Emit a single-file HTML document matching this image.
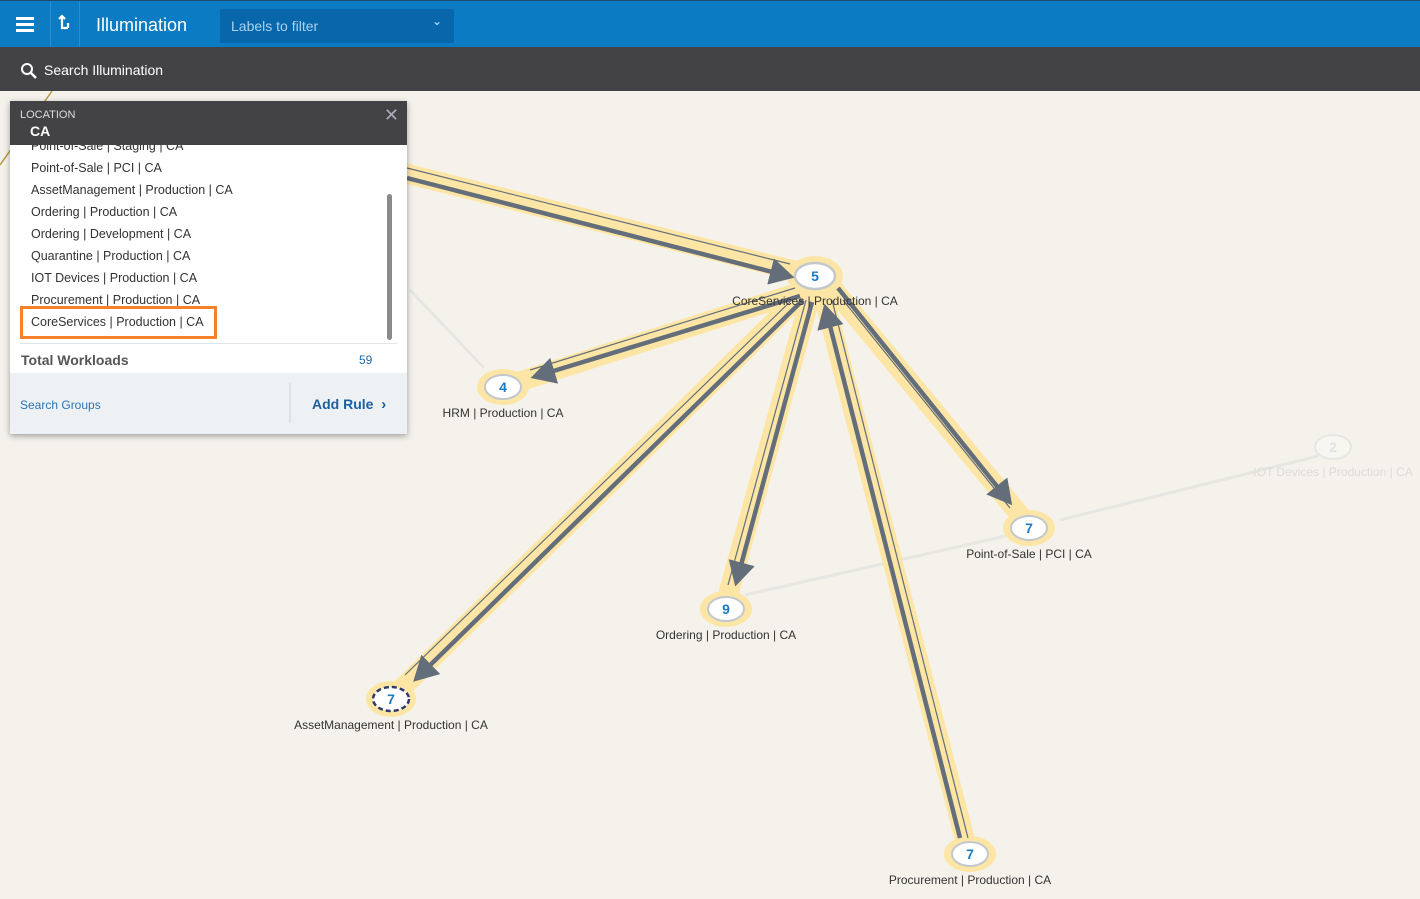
<!DOCTYPE html>
<html><head><meta charset="utf-8"><style>
*{margin:0;padding:0;box-sizing:border-box}
body{width:1420px;height:899px;overflow:hidden;background:#f4f2eb;font-family:"Liberation Sans","DejaVu Sans",sans-serif;position:relative}
.top{position:absolute;left:0;top:0;width:1420px;height:47px;background:#0b7bc3;border-top:1px solid #1b4a6e}
.sb{position:absolute;left:0;top:47px;width:1420px;height:44px;background:#434345;color:#fff;font-size:14px}
svg.g{position:absolute;left:0;top:0}
.panel{position:absolute;left:10px;top:101px;width:397px;height:333px;background:#fff;box-shadow:0 2px 6px rgba(0,0,0,.35)}
.ph{height:44px;background:#434345;color:#fff;position:relative}
</style></head><body>
<svg class="g" width="1420" height="899">
<defs>
<marker id="a" markerWidth="6" markerHeight="6" refX="4" refY="3" orient="auto" markerUnits="strokeWidth"><path d="M0,0 L5.5,3 L0,6 Z" fill="#636e7a"/></marker>
</defs>
<path d="M52,91 L0,165" stroke="#b8953e" stroke-width="1.5"/>
<g stroke="#e6e6e3" stroke-width="3" fill="none">
<line x1="410" y1="290" x2="484" y2="368"/>
<line x1="745" y1="595" x2="1010" y2="535"/>
<line x1="1318" y1="456" x2="1060" y2="520"/>
</g>
<g stroke="#fde6a5" stroke-width="20" stroke-linecap="round" fill="none">
<line x1="400" y1="172" x2="800" y2="272"/>
<line x1="800" y1="292" x2="515" y2="383"/>
<line x1="800" y1="296" x2="400" y2="690"/>
<line x1="810" y1="298" x2="728" y2="595"/>
<line x1="824" y1="298" x2="965" y2="840"/>
<line x1="834" y1="290" x2="1020" y2="515"/>
</g>
<g fill="#fde6a5"><ellipse cx="815" cy="276" rx="28" ry="20"/><ellipse cx="503" cy="387" rx="26" ry="18"/><ellipse cx="726" cy="609" rx="26" ry="18"/><ellipse cx="1029" cy="528" rx="26" ry="18"/><ellipse cx="391" cy="699" rx="25" ry="18"/><ellipse cx="970" cy="854" rx="26" ry="18"/></g>
<g stroke="#636e7a" fill="none" stroke-linecap="butt">
<line x1="407" y1="178" x2="788" y2="276" stroke-width="4.5" marker-end="url(#a)"/>
<line x1="407" y1="168" x2="790" y2="264" stroke-width="1.2"/>
<line x1="800" y1="296" x2="537" y2="376" stroke-width="4.5" marker-end="url(#a)"/>
<line x1="795" y1="288" x2="530" y2="370" stroke-width="1.2"/>
<line x1="803" y1="300" x2="418" y2="677" stroke-width="4.5" marker-end="url(#a)"/>
<line x1="797" y1="295" x2="405" y2="675" stroke-width="1.2"/>
<line x1="812" y1="302" x2="737" y2="580" stroke-width="4.5" marker-end="url(#a)"/>
<line x1="806" y1="300" x2="728" y2="585" stroke-width="1.2"/>
<line x1="960" y1="838" x2="826" y2="310" stroke-width="4.5" marker-end="url(#a)"/>
<line x1="832" y1="300" x2="968" y2="838" stroke-width="1.2"/>
<line x1="838" y1="288" x2="1008" y2="500" stroke-width="4.5" marker-end="url(#a)"/>
<line x1="843" y1="300" x2="1010" y2="508" stroke-width="1.2"/>
</g>
<g font-family="Liberation Sans,sans-serif" font-size="14" font-weight="bold" fill="#1a7bc0" text-anchor="middle">
<ellipse cx="815" cy="276" rx="20" ry="13" fill="#fff" stroke="#c3c8cc" stroke-width="2.5"/><text x="815" y="281">5</text>
<ellipse cx="503" cy="387" rx="18" ry="12" fill="#fff" stroke="#c3c8cc" stroke-width="2"/><text x="503" y="392">4</text>
<ellipse cx="726" cy="609" rx="18" ry="12" fill="#fff" stroke="#c3c8cc" stroke-width="2"/><text x="726" y="614">9</text>
<ellipse cx="1029" cy="528" rx="18" ry="12" fill="#fff" stroke="#c3c8cc" stroke-width="2"/><text x="1029" y="533">7</text>
<ellipse cx="391" cy="699" rx="18" ry="12" fill="#fff" stroke="#2f3a6b" stroke-width="2.5" stroke-dasharray="5,3"/><text x="391" y="704">7</text>
<ellipse cx="970" cy="854" rx="18" ry="12" fill="#fff" stroke="#c3c8cc" stroke-width="2"/><text x="970" y="859">7</text>
<ellipse cx="1333" cy="447" rx="18" ry="12" fill="#f7f6f1" stroke="#e6e6e3" stroke-width="2"/><text x="1333" y="452" fill="#dde3e8">2</text>
</g>
<g font-family="Liberation Sans,sans-serif" font-size="12" fill="#333" text-anchor="middle">
<text x="815" y="305">CoreServices | Production | CA</text>
<text x="503" y="417">HRM | Production | CA</text>
<text x="726" y="639">Ordering | Production | CA</text>
<text x="1029" y="558">Point-of-Sale | PCI | CA</text>
<text x="391" y="729">AssetManagement | Production | CA</text>
<text x="970" y="884">Procurement | Production | CA</text>
<text x="1333" y="476" fill="#dcdcd8">IOT Devices | Production | CA</text>
</g>
</svg>
<div class="top">
<svg width="50" height="46" style="position:absolute;left:0;top:0"><g fill="#fff"><rect x="16" y="16" width="18" height="3"/><rect x="16" y="22" width="18" height="3"/><rect x="16" y="28" width="18" height="3"/></g></svg>
<div style="position:absolute;left:50px;top:0;width:1px;height:46px;background:#2a8ed0"></div>
<div style="position:absolute;left:79px;top:0;width:1px;height:46px;background:#2a8ed0"></div>
<svg width="20" height="20" style="position:absolute;left:56px;top:13px"><path d="M6,2 V14 H12 M3,5 L6,2 L9,5 M12,14 L12,9" stroke="#fff" stroke-width="2.2" fill="none"/></svg>
<div style="position:absolute;left:96px;top:14px;color:#fff;font-size:18px">Illumination</div>
<div style="position:absolute;left:220px;top:8px;width:234px;height:34px;background:#0867ab;border-radius:2px;color:#a9d2ef;font-size:14px;padding:9px 11px">Labels to filter<span style="position:absolute;right:12px;top:5px;font-size:12px;color:#cfe6f7">&#8964;</span></div>
</div>
<div class="sb">
<svg width="18" height="18" style="position:absolute;left:20px;top:15px"><circle cx="7" cy="7" r="5" stroke="#fff" stroke-width="2" fill="none"/><line x1="11" y1="11" x2="16" y2="16" stroke="#fff" stroke-width="2.5"/></svg>
<div style="position:absolute;left:44px;top:15px">Search Illumination</div>
</div>
<div class="panel">
<div class="ph"><div style="position:absolute;left:10px;top:8px;font-size:11px;color:#ddd">LOCATION</div><div style="position:absolute;left:20px;top:22px;font-size:14px;font-weight:bold">CA</div><div style="position:absolute;right:8px;top:4px;font-size:18px;color:#aab;font-weight:bold">✕</div></div>
<div style="position:absolute;left:0;top:44px;width:397px;height:198px;overflow:hidden">
<div style="position:absolute;left:21px;top:-10px;font-size:12.5px;color:#333;line-height:22px">
Point-of-Sale | Staging | CA<br>Point-of-Sale | PCI | CA<br>AssetManagement | Production | CA<br>Ordering | Production | CA<br>Ordering | Development | CA<br>Quarantine | Production | CA<br>IOT Devices | Production | CA<br>Procurement | Production | CA<br>CoreServices | Production | CA</div></div>
<div style="position:absolute;left:377px;top:93px;width:5px;height:146px;background:#8a8a8a;border-radius:3px"></div>
<div style="position:absolute;left:10px;top:205px;width:197px;height:33px;border:3px solid #f5822a"></div>
<div style="position:absolute;left:10px;top:242px;width:377px;height:1px;background:#e1e4e8"></div>
<div style="position:absolute;left:11px;top:251px;font-size:14px;font-weight:bold;color:#555">Total Workloads</div>
<div style="position:absolute;left:349px;top:252px;font-size:12px;color:#1e6aa8">59</div>
<div style="position:absolute;left:0;top:272px;width:397px;height:61px;background:#eef1f4">
<div style="position:absolute;left:10px;top:25px;font-size:12px;color:#2b74b3">Search Groups</div>
<div style="position:absolute;left:279px;top:10px;width:2px;height:40px;background:#dde2e7"></div>
<div style="position:absolute;left:302px;top:23px;font-size:14px;font-weight:bold;color:#1b5fa0">Add Rule &nbsp;<span style="font-size:15px">›</span></div>
</div>
</div>
</body></html>
